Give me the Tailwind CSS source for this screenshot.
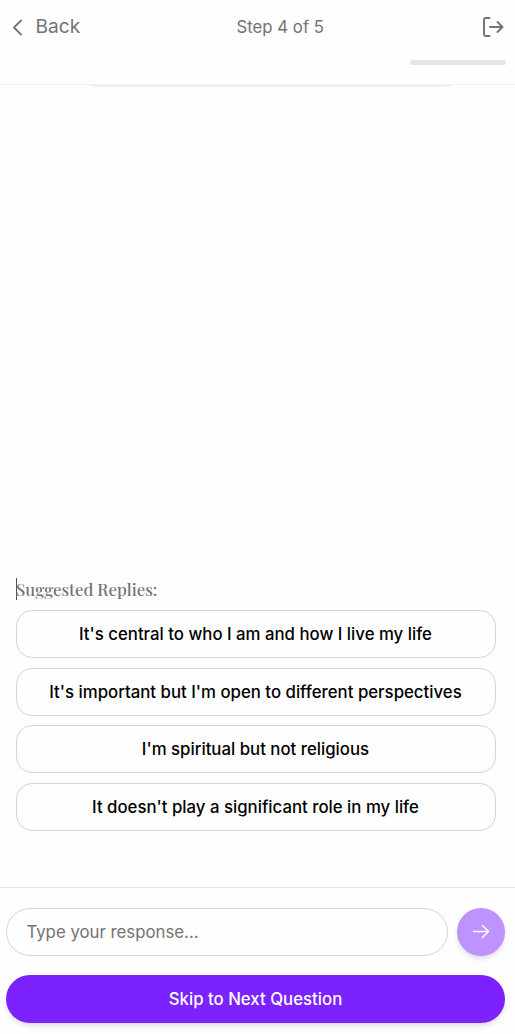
<!DOCTYPE html>
<html lang="en">
<head>
<meta charset="utf-8">
<title>Step 4 of 5</title>
<script src="https://cdn.jsdelivr.net/npm/@tailwindcss/browser@4"></script>
</head>
<body class="bg-[#fefefe] font-['Inter',sans-serif]">
<div class="flex h-[1034px] w-full flex-col overflow-hidden">
  <header class="h-[85px] shrink-0 border-b border-[#f3f3f3] px-[9px]">
    <div class="flex h-[54px] items-center text-[#737373]">
      <button class="flex w-[227.4px] items-center gap-[8.4px] text-[19.2px] leading-7">
        <svg class="-ml-px size-[19px]" viewBox="0 0 19 19" fill="none" stroke="currentColor" stroke-width="1.8" stroke-linecap="round" stroke-linejoin="round"><path d="M13 2.500 6 9.500l7 7"/></svg>
        <span class="pb-[2px]">Back</span>
      </button>
      <span class="pt-[2px] text-[16.8px] whitespace-nowrap">Step 4 of 5</span>
      <svg class="ml-auto size-[24px]" viewBox="0 0 24 24" fill="none" stroke="currentColor" stroke-width="1.9" stroke-linecap="round" stroke-linejoin="round"><path d="M7.500 3H3.500A1.500 1.500 0 0 0 2 4.500v15A1.500 1.500 0 0 0 3.500 21H7.500M8 12H20.500M15.500 7l5 5-5 5"/></svg>
    </div>
    <div class="mt-[6px] ml-auto h-[5px] w-[96px] rounded-full bg-[#e5e5e5]"></div>
  </header>
  <main class="flex min-h-0 flex-1 flex-col px-4">
    <div class="-mt-px ml-[64px] flex h-[3px] w-[381px] flex-col justify-end overflow-hidden"><div class="h-6 shrink-0 rounded-b-[16px] bg-[#efefef]"></div></div>
    <section class="mt-[491px] w-[480px]">
      <h2 class="h-[22px] w-fit border-l border-[#555] font-['Playfair_Display','Liberation_Serif',serif] text-[16.8px] leading-[22px] font-medium whitespace-nowrap text-[#737373]"><span class="-ml-px">Suggested Replies:</span></h2>
      <div class="mt-[10px] flex flex-col gap-[9.6px] text-[16.8px] font-medium text-black">
        <button class="h-12 rounded-[16px] border border-[#d4d4d4] pt-px pr-px">It's central to who I am and how I live my life</button>
        <button class="h-12 rounded-[16px] border border-[#d4d4d4] pt-px pr-px">It's important but I'm open to different perspectives</button>
        <button class="h-12 rounded-[16px] border border-[#d4d4d4] pr-px">I'm spiritual but not religious</button>
        <button class="h-12 rounded-[16px] border border-[#d4d4d4] pt-px pr-px">It doesn't play a significant role in my life</button>
      </div>
    </section>
  </main>
  <footer class="h-[147px] shrink-0 border-t border-[#e5e5e5] pt-[20px] pr-[10px] pl-[6px]">
    <div class="flex items-center gap-[9px]">
      <input class="h-12 min-w-0 flex-1 rounded-full border border-[#d4d4d4] px-[19.4px] text-[16.8px] placeholder:text-[#737373]" placeholder="Type your response...">
      <button class="flex size-12 items-center justify-center rounded-full bg-[#be92ff] text-white shadow-md">
        <svg class="size-[20px]" viewBox="0 0 20 20" fill="none" stroke="currentColor" stroke-width="1.5" stroke-linecap="round" stroke-linejoin="round"><path d="M2.500 9.500h15M11.500 3.500l6 6-6 6"/></svg>
      </button>
    </div>
    <button class="mt-[19px] h-12 w-full rounded-full bg-[#7c22ff] pt-px text-[16.8px] font-medium text-white shadow-md">Skip to Next Question</button>
  </footer>
</div>
</body>
</html>
